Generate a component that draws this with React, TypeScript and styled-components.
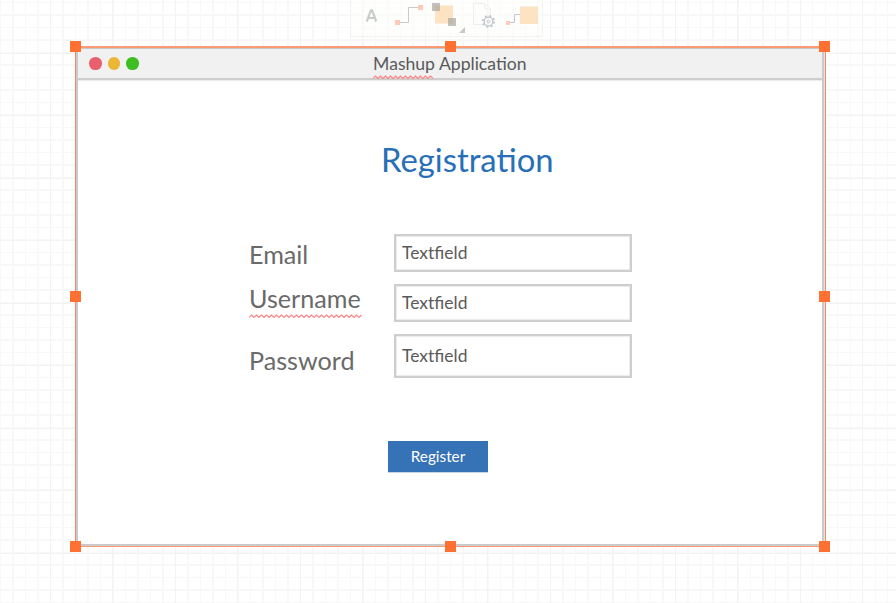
import React from "react";
import styled, { createGlobalStyle } from "styled-components";

const GlobalStyle = createGlobalStyle`
  *, *::before, *::after { box-sizing: border-box; }
  body { margin: 0; font-family: Lato, "Open Sans", sans-serif; }
`;

const Canvas = styled.main`
  position: relative;
  width: 896px;
  height: 603px;
  padding: 46px 70px 0 75px;
  overflow: hidden;
  background:
    repeating-linear-gradient(90deg, #f3f3f3 0 1px, transparent 1px 62.5px) 50px 0 / 846px 100% no-repeat,
    repeating-linear-gradient(180deg, #f3f3f3 0 1px, transparent 1px 62.5px) 0 53px / 100% 550px no-repeat,
    repeating-linear-gradient(90deg, #f8f8f8 0 1px, transparent 1px 12.5px),
    repeating-linear-gradient(180deg, #f8f8f8 0 1px, transparent 1px 12.5px) 0 2px,
    #fff;
`;

const Toolbar = styled.svg`
  position: absolute;
  left: 350px;
  top: 0;
`;

const Selection = styled.section`
  position: relative;
  width: 751px;
  height: 501px;
  border: 1px solid #ef8b66;
  border-top: 2px solid #fc9b73;
  border-bottom-color: #ff9b73;
  background: #e4e4e4;
  padding-right: 1px;
`;

const Handle = styled.i<{ $x: number; $y: number }>`
  position: absolute;
  left: ${(p) => p.$x}px;
  top: ${(p) => p.$y}px;
  width: 11px;
  height: 11px;
  background: #ff7133;
`;

const Window = styled.div`
  height: 100%;
  display: flex;
  flex-direction: column;
  border: 2px solid #cacaca;
  border-top: 1px solid #c8c8c8;
  background: #fff;
`;

const TitleBar = styled.header`
  position: relative;
  flex: none;
  display: flex;
  align-items: center;
  height: 31px;
  background: #f1f1f1;
  border-bottom: 2px solid #cdcdcd;
  box-shadow: 0 1px #ececec;
  padding: 0 11px;
`;

const Lights = styled.div`
  display: flex;
  gap: 6px;
`;

const Light = styled.span<{ $color: string }>`
  width: 12.7px;
  height: 12.7px;
  border-radius: 50%;
  background: ${(p) => p.$color};
`;

const Title = styled.span`
  margin-left: 234px;
  font-size: 17.6px;
  line-height: 22px;
  color: #5a5a5a;
  white-space: nowrap;
`;

const Content = styled.div`
  display: flex;
  flex-direction: column;
  padding-left: 171px;
`;

const Heading = styled.h1`
  margin: 60px 0 0 132px;
  font-size: 32.8px;
  line-height: 40px;
  font-weight: 400;
  color: #276fb8;
`;

const Form = styled.form`
  display: grid;
  grid-template-columns: 145px 238px;
  grid-template-rows: 38px 38px 44px;
  row-gap: 12px;
  margin-top: 54px;
`;

const Label = styled.label<{ $shift: number }>`
  margin-top: ${(p) => p.$shift}px;
  font-size: 25.15px;
  line-height: 32px;
  color: #6a6a6a;
`;

const Marked = styled.span`
  position: relative;
  display: inline-block;
`;

const Squiggle = styled.svg<{ $top: number }>`
  position: absolute;
  left: 0;
  top: ${(p) => p.$top}px;
`;

const Field = styled.div<{ $top: number }>`
  border: 2px solid #cecece;
  box-shadow: inset 0 0 0 1px #ececec;
  padding: ${(p) => p.$top}px 0 0 6px;
  font-size: 17.5px;
  line-height: 22px;
  color: #5a5a5a;
`;

const Button = styled.button`
  margin: 63px 0 0 139px;
  width: 100px;
  height: 31px;
  border: 0;
  background: #3572b6;
  box-shadow: 0 1px #c3d6ea;
  color: #fff;
  font: 400 15.3px/20px Lato, sans-serif;
  padding: 0 0 2px;
`;

function Wave({ width, top }: { width: number; top: number }) {
  const points = Array.from({ length: Math.floor(width / 2.5) + 1 }, (_, i) => `${i * 2.5},${i % 2 ? 1 : 3.4}`).join(" ");
  return (
    <Squiggle $top={top} width={width} height="5" aria-hidden="true">
      <polyline points={points} fill="none" stroke="#ff8080" strokeWidth="1.1" />
    </Squiggle>
  );
}

const handles = [[-6, -7], [369, -7], [743, -7], [-6, 243], [743, 243], [-6, 493], [369, 493], [743, 493]];

export default function App() {
  return (
    <>
      <GlobalStyle />
      <Canvas>
        <Toolbar width="195" height="40" aria-hidden="true">
          <path d="M.5 0V36.5H192.5V0" fill="#fdfdfb" fillOpacity=".5" stroke="#f2f2ee" />
          <path d="M16.8 21.5 20.9 10.3H22.1L26.2 21.5M18.5 18H24.5" fill="none" stroke="#c9cccd" strokeWidth="2.2" />
          <path d="M48 22.5H58.5V7.5H70" fill="none" stroke="#c5cacd" />
          <path d="M45 20h5v5h-5zM68 5h5v5h-5z" fill="#ffcbb9" />
          <path d="M85 5.5h18v18H85z" fill="#fde3c2" />
          <path d="M82 3h8v8h-8zM98 18h8v8h-8z" fill="#aaa69c" fillOpacity=".7" />
          <path d="M115 27v6h-6z" fill="#c8c8c8" />
          <path d="M133 24.5H123.5V3.5H135L140.5 9V15M135 3.5V9H140.5" fill="none" stroke="#efefef" />
          <g fill="none" stroke="#bfc5ca">
            <circle cx="138.5" cy="21.5" r="4.4" strokeWidth="1.3" />
            <circle cx="138.5" cy="21.5" r="1.4" />
            <circle cx="138.5" cy="21.5" r="5.7" strokeWidth="1.7" strokeDasharray="2 2.48" />
          </g>
          <path d="M159 22.5H164.5V14.5H171" fill="none" stroke="#bfc8d4" />
          <path d="M156 21h4v4h-4z" fill="#ffcbb9" />
          <path d="M170 6.5h18v17.5h-18z" fill="#fde3c2" />
        </Toolbar>
        <Selection>
          <Window>
            <TitleBar>
              <Lights>
                <Light $color="#ea5f6d" />
                <Light $color="#ebb734" />
                <Light $color="#3cbe20" />
              </Lights>
              <Title>
                <Marked>Mashup<Wave width={62} top={22} /></Marked> Application
              </Title>
            </TitleBar>
            <Content>
              <Heading>Registration</Heading>
              <Form>
                <Label $shift={4}>Email</Label>
                <Field $top={6}>Textfield</Field>
                <Label $shift={-2}><Marked>Username<Wave width={113} top={32} /></Marked></Label>
                <Field $top={6}>Textfield</Field>
                <Label $shift={10}>Password</Label>
                <Field $top={9}>Textfield</Field>
              </Form>
              <Button type="button">Register</Button>
            </Content>
          </Window>
          {handles.map(([x, y]) => <Handle key={`${x}:${y}`} $x={x} $y={y} />)}
        </Selection>
      </Canvas>
    </>
  );
}
